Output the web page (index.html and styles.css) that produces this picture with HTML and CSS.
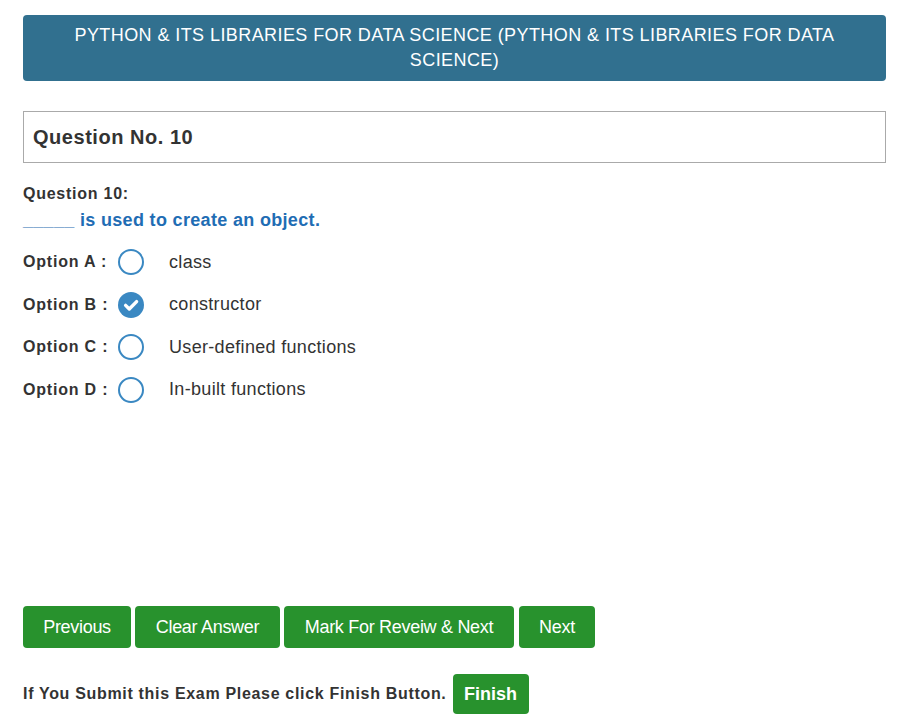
FILE: index.html
```html
<!DOCTYPE html>
<html>
<head>
<meta charset="utf-8">
<link rel="stylesheet" href="styles.css">
</head>
<body>
<div class="page">
  <div class="title-bar">PYTHON &amp; ITS LIBRARIES FOR DATA SCIENCE (PYTHON &amp; ITS LIBRARIES FOR DATA SCIENCE)</div>
  <div class="qno-box">Question No. 10</div>
  <div class="q-label">Question 10:</div>
  <div class="q-text"><span class="blank">_____</span> is used to create an object.</div>
  <div class="options">
    <div class="opt"><span class="opt-label">Option A :</span><span class="radio"></span><span class="opt-text">class</span></div>
    <div class="opt"><span class="opt-label">Option B :</span><span class="radio checked"><svg viewBox="0 0 26 26" width="26" height="26"><circle cx="13" cy="13" r="13" fill="#3a88c2"/><path d="M7.6 13.4 L11.3 17 L18.6 9.6" fill="none" stroke="#fff" stroke-width="3.4" stroke-linecap="round" stroke-linejoin="round"/></svg></span><span class="opt-text">constructor</span></div>
    <div class="opt"><span class="opt-label">Option C :</span><span class="radio"></span><span class="opt-text">User-defined functions</span></div>
    <div class="opt"><span class="opt-label">Option D :</span><span class="radio"></span><span class="opt-text">In-built functions</span></div>
  </div>
  <div class="actions">
    <button class="btn w-prev">Previous</button>
    <button class="btn w-clear">Clear Answer</button>
    <button class="btn w-mark">Mark For Reveiw &amp; Next</button>
    <button class="btn w-next">Next</button>
  </div>
  <div class="finish-row">
    <span class="finish-text">If You Submit this Exam Please click Finish Button.</span>
    <button class="btn finish">Finish</button>
  </div>
</div>
</body>
</html>
```

FILE: styles.css
```css
html, body {
  margin: 0;
  padding: 0;
  background: #fff;
}
body {
  font-family: "Liberation Sans", Arial, sans-serif;
  color: #333;
}
.page {
  padding: 15px 15px 0 23px;
}
.title-bar {
  background: #31708f;
  color: #fff;
  border-radius: 4px;
  text-align: center;
  font-size: 18px;
  letter-spacing: 0.42px;
  line-height: 25px;
  padding: 8px 20px 8px;
}
.qno-box {
  margin-top: 30px;
  border: 1px solid #aaa;
  font-weight: bold;
  font-size: 20px;
  letter-spacing: 0.53px;
  line-height: 26px;
  padding: 12px 9px;
  color: #333;
}
.q-label {
  margin-top: 20px;
  font-weight: bold;
  font-size: 16px;
  letter-spacing: 0.75px;
  line-height: 22px;
}
.q-text {
  margin-top: 2px;
  font-weight: bold;
  font-size: 18px;
  letter-spacing: 0.33px;
  line-height: 26px;
  color: #1f6db4;
}
.blank {
  letter-spacing: 0.3px;
}
.options {
  margin-top: 8px;
}
.opt {
  display: flex;
  align-items: center;
  height: 42.5px;
}
.opt-label {
  width: 95px;
  font-weight: bold;
  font-size: 16px;
  letter-spacing: 0.8px;
  white-space: nowrap;
}
.radio {
  width: 26px;
  height: 26px;
  box-sizing: border-box;
  border: 2px solid #3a88c2;
  border-radius: 50%;
  display: flex;
  flex-shrink: 0;
}
.radio.checked {
  border: none;
}
.opt-text {
  margin-left: 25px;
  font-size: 18px;
  letter-spacing: 0.32px;
}
.actions {
  margin-top: 195px;
  display: flex;
  gap: 4px;
}
.btn {
  font-family: "Liberation Sans", Arial, sans-serif;
  background: #28922d;
  color: #fff;
  border: none;
  border-radius: 4px;
  font-size: 18px;
  height: 42px;
  padding: 0;
  letter-spacing: -0.3px;
}
.w-prev { width: 108px; }
.w-clear { width: 145px; }
.w-mark { width: 230px; }
.w-next { width: 76px; margin-left: 1px; }
.finish-row {
  margin-top: 26px;
  display: flex;
  align-items: center;
}
.finish-text {
  font-weight: bold;
  font-size: 16px;
  letter-spacing: 0.68px;
  margin-right: 6px;
}
.btn.finish {
  width: 76px;
  height: 40px;
  font-weight: bold;
  letter-spacing: 0;
}
```
